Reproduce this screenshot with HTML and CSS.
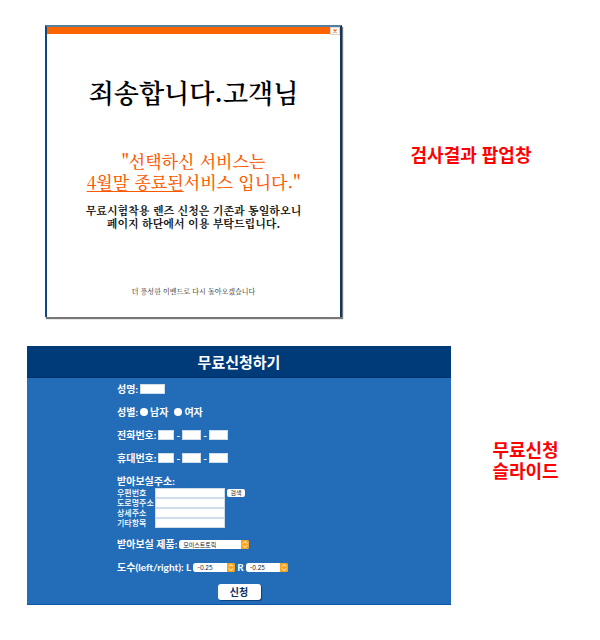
FILE: index.html
```html
<!DOCTYPE html>
<html lang="ko">
<head>
<meta charset="utf-8">
<meta name="viewport" content="width=device-width, initial-scale=1">
<title>무료신청하기</title>
<link rel="stylesheet" href="styles.css">
</head>
<body>
<main class="page">
  <section class="row row-popup">
    <article class="popup">
      <div class="popup-bar">
        <button class="popup-close" type="button" aria-label="닫기">
          <svg viewBox="0 0 8 6" width="8" height="6"><path d="M2.5 1.5 5.5 4.5M5.5 1.5 2.5 4.5" stroke="#f26a1b" stroke-width="1.3" fill="none"/></svg>
        </button>
      </div>
      <h1 class="popup-title">죄송합니다.고객님</h1>
      <p class="popup-notice">"선택하신 서비스는<br><u>4월말 종료된</u>서비스 입니다."</p>
      <p class="popup-info">무료시험착용 렌즈 신청은 기존과 동일하오니<br>페이지 하단에서 이용 부탁드립니다.</p>
      <p class="popup-foot">더 풍성한 이벤드로 다시 돌아오겠습니다</p>
    </article>
    <p class="caption">검사결과 팝업창</p>
  </section>

  <section class="row row-form">
    <form class="apply">
      <h2 class="apply-title">무료신청하기</h2>
      <div class="fields">
        <div class="field">
          <label for="name">성명:</label>
          <input class="box box-name" id="name" type="text">
        </div>
        <div class="field" role="radiogroup" aria-label="성별">
          <span>성별:</span>
          <label class="choice"><input class="radio" type="radio" name="sex">남자</label>
          <label class="choice choice-next"><input class="radio" type="radio" name="sex">여자</label>
        </div>
        <div class="field">
          <label for="tel1">전화번호:</label>
          <input class="box box-first" id="tel1" type="text"><span>-</span>
          <input class="box box-num" type="text" aria-label="전화번호 가운데"><span>-</span>
          <input class="box box-num" type="text" aria-label="전화번호 끝">
        </div>
        <div class="field">
          <label for="cell1">휴대번호:</label>
          <input class="box box-first" id="cell1" type="text"><span>-</span>
          <input class="box box-num" type="text" aria-label="휴대번호 가운데"><span>-</span>
          <input class="box box-num" type="text" aria-label="휴대번호 끝">
        </div>
        <div class="address">
          <div class="field">받아보실주소:</div>
          <div class="line">
            <label for="zip">우편번호</label><input class="box" id="zip" type="text">
            <button class="search" type="button">검색</button>
          </div>
          <div class="line"><label for="road">도로명주소</label><input class="box" id="road" type="text"></div>
          <div class="line"><label for="detail">상세주소</label><input class="box" id="detail" type="text"></div>
          <div class="line"><label for="etc">기타항목</label><input class="box" id="etc" type="text"></div>
        </div>
        <div class="field">
          <label for="product">받아보실 제품:</label>
          <span class="pick pick-wide">
            <select id="product"><option>모이스트토릭</option></select>
            <svg viewBox="0 0 8 9"><path d="M2 3.5 4 1.5 6 3.5M2 5.5 4 7.5 6 5.5"/></svg>
          </span>
        </div>
        <div class="field">
          <label for="left">도수(left/right): L</label>
          <span class="pick">
            <select id="left"><option>-0.25</option></select>
            <svg viewBox="0 0 8 9"><path d="M2 3.5 4 1.5 6 3.5M2 5.5 4 7.5 6 5.5"/></svg>
          </span>
          <label for="right">R</label>
          <span class="pick">
            <select id="right"><option>-0.25</option></select>
            <svg viewBox="0 0 8 9"><path d="M2 3.5 4 1.5 6 3.5M2 5.5 4 7.5 6 5.5"/></svg>
          </span>
        </div>
      </div>
      <button class="submit" type="submit">신청</button>
    </form>
    <p class="caption">무료신청<br>슬라이드</p>
  </section>
</main>
</body>
</html>
```
FILE: styles.css
```css
* {
  box-sizing: border-box;
}

body {
  margin: 0;
  background: #fff;
  font-family: "Noto Sans CJK KR", sans-serif;
}

h1, h2, p {
  margin: 0;
}

input, select, button {
  margin: 0;
  padding: 0;
  border: 0;
  font-family: inherit;
}

.page {
  display: grid;
  gap: 29px;
  padding: 25px 0;
}

.row {
  display: grid;
  align-items: center;
}

.row-popup {
  grid-template-columns: 297fr 258fr;
  padding-left: 45px;
}

.row-form {
  grid-template-columns: 424fr 149fr;
  padding-left: 27px;
}

.caption {
  color: #f00;
  font-size: 18px;
  font-weight: 700;
  line-height: 21px;
  text-align: center;
}

.row-popup .caption {
  padding-bottom: 34px;
}

.row-form .caption {
  padding-bottom: 32px;
}

/* Notice popup */
.popup {
  border: 2px solid #0f4580;
  border-top-color: #557f9f;
  border-right-color: #12365e;
  border-bottom: 0;
  padding-bottom: 21px;
  background: #fff;
  box-shadow: 1px 2px 1px #777;
  font-family: "Noto Serif CJK KR", "Noto Sans CJK KR", serif;
  text-align: center;
}

.popup-bar {
  display: flex;
  justify-content: flex-end;
  height: 7px;
  background: #fb6400;
}

.popup-close {
  display: flex;
  width: 10px;
  height: 8px;
  align-items: center;
  justify-content: center;
  border: 1px solid #e4d4c8;
  background: #fff;
}

.popup-title {
  padding-top: 38px;
  color: #000;
  font-size: 26px;
  font-weight: 600;
  line-height: 40px;
}

.popup-notice {
  padding-top: 38px;
  color: #fb5a00;
  font-size: 17px;
  font-weight: 500;
  line-height: 21px;
}

.popup-notice u {
  text-decoration-thickness: 1px;
  text-underline-offset: 2px;
}

.popup-info {
  padding-top: 12px;
  color: #111;
  font-size: 11px;
  font-weight: 700;
  line-height: 13px;
}

.popup-foot {
  padding-top: 56px;
  color: #222;
  font-size: 7px;
  line-height: 10px;
}

/* Application form */
.apply {
  padding-bottom: 4px;
  border-bottom: 1px solid #0d56a5;
  background: #236db8;
  color: #fff;
}

.apply-title {
  border-bottom: 1px solid #002f68;
  background: #003b79;
  font-size: 15px;
  font-weight: 700;
  line-height: 31px;
  text-align: center;
}

.fields {
  display: grid;
  gap: 9px;
  padding: 4px 8px 0 90px;
  font-family: Lato, "Noto Sans CJK KR", sans-serif;
}

.field {
  display: flex;
  gap: 2px;
  height: 14px;
  align-items: center;
  font-size: 10px;
  font-weight: 700;
  line-height: 14px;
  white-space: nowrap;
}

.box {
  height: 10px;
  border: 1px solid #cfdcea;
  border-radius: 0;
  background: #fff;
  font-size: 8px;
}

.box-name {
  width: 25px;
}

.box-first {
  width: 16px;
}

.box-num {
  width: 19px;
}

.choice {
  display: flex;
  gap: 2px;
  align-items: center;
}

.choice-next {
  margin-left: 4px;
}

.radio {
  width: 8px;
  height: 8px;
  border-radius: 50%;
  appearance: none;
  background: #fff;
}

.radio:checked {
  border: 2px solid #fff;
  background: #003b79;
}

.line {
  display: grid;
  grid-template-columns: 38px 70px auto;
  height: 10px;
  align-items: center;
  justify-content: start;
  font-size: 8px;
  font-weight: 500;
  line-height: 10px;
  white-space: nowrap;
}

.search {
  width: 18px;
  height: 8px;
  margin-left: 2px;
  border-radius: 2px;
  background: #fff;
  color: #222;
  font-size: 6px;
  line-height: 8px;
}

.pick {
  position: relative;
  display: flex;
  width: 42px;
  height: 9px;
  overflow: hidden;
  border-radius: 2px;
}

.pick-wide {
  width: 70px;
}

.pick select {
  width: 100%;
  height: 9px;
  padding-left: 4px;
  border-radius: 2px;
  appearance: none;
  background: #fff;
  color: #111;
  font-family: Inter, "Noto Sans CJK KR", sans-serif;
  font-size: 6px;
  line-height: 9px;
}

.pick svg {
  position: absolute;
  top: 0;
  right: 0;
  width: 8px;
  height: 9px;
  background: #f7a51f;
  fill: none;
  pointer-events: none;
  stroke: #fff;
  stroke-width: 1;
}

.submit {
  display: block;
  width: 43px;
  height: 16px;
  margin: 10px auto 0;
  border-radius: 3px;
  background: #fff;
  box-shadow: 1px 1px 1px #0c3f7c;
  color: #0b2f63;
  font-size: 10px;
  font-weight: 700;
  line-height: 16px;
}
```
